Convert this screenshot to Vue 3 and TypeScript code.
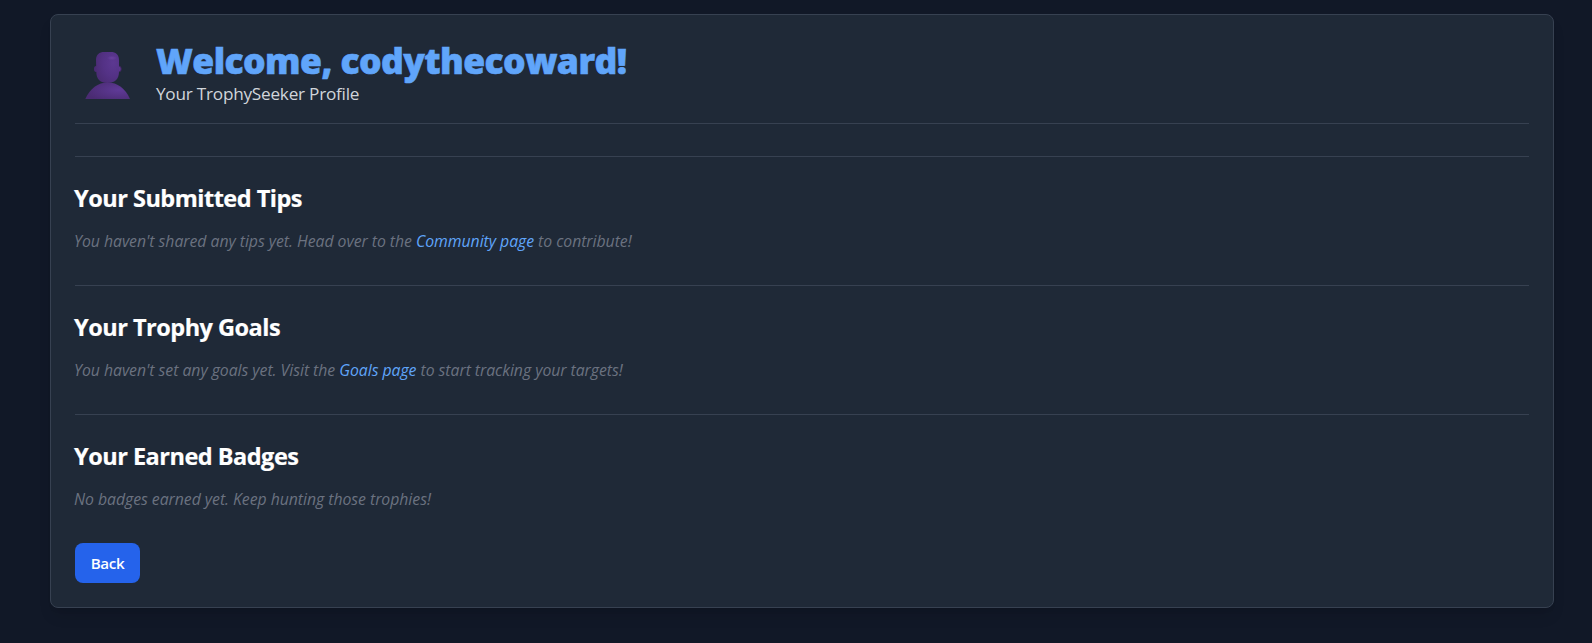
<template>
  <div class="profile-page">
    <main class="profile-card">
      <header class="profile-header">
        <svg class="profile-avatar" viewBox="0 0 64 64" aria-hidden="true">
          <defs>
            <radialGradient id="head" cx="0.75" cy="0.35" r="0.85">
              <stop offset="0" stop-color="#5c3891" />
              <stop offset="0.5" stop-color="#543286" />
              <stop offset="1" stop-color="#4a2b73" />
            </radialGradient>
            <radialGradient id="shoulders" cx="0.75" cy="0.45" r="0.75">
              <stop offset="0" stop-color="#5f3a97" />
              <stop offset="1" stop-color="#4a2b72" />
            </radialGradient>
            <radialGradient id="shine">
              <stop offset="0" stop-color="#6a419f" />
              <stop offset="1" stop-color="#6a419f" stop-opacity="0" />
            </radialGradient>
          </defs>
          <ellipse cx="21" cy="28" rx="2" ry="3" fill="#4a2b73" />
          <ellipse cx="44.200" cy="28" rx="2" ry="2.800" fill="#5a368c" stroke="#402460" stroke-width="0.8" />
          <path d="M10.300 58C15 47.500 23 41.500 32.700 41.500S50.500 47.500 55 58Z" fill="url(#shoulders)" />
          <path
            d="M21 19C21 13.500 24.500 11 29 11H36C40.500 11 44 13.500 44 19V31C44 38.500 39.500 41.900 32.500 41.900S21.300 38.500 21.300 31Z"
            fill="url(#head)" />
          <ellipse cx="37" cy="17" rx="5" ry="2.200" fill="url(#shine)" />
        </svg>

        <div>
          <h1 class="profile-title">Welcome, {{ username }}!</h1>
          <p class="profile-subtitle">Your TrophySeeker Profile</p>
        </div>
      </header>

      <section v-for="section in sections" :key="section.title" class="profile-section">
        <h2 class="section-title">{{ section.title }}</h2>
        <p class="section-empty">
          {{ section.before }}
          <template v-if="section.link">
            <a class="section-link" href="#" @click.prevent>{{ section.link }}</a>
            {{ section.after }}
          </template>
        </p>
      </section>

      <button class="back-button" type="button" @click="goBack">Back</button>
    </main>
  </div>
</template>

<script setup lang="ts">
import { ref } from 'vue';

interface ProfileSection {
  title: string;
  before: string;
  link?: string;
  after?: string;
}

const username = ref('codythecoward');

const sections: ProfileSection[] = [
  {
    title: 'Your Submitted Tips',
    before: "You haven't shared any tips yet. Head over to the",
    link: 'Community page',
    after: 'to contribute!',
  },
  {
    title: 'Your Trophy Goals',
    before: "You haven't set any goals yet. Visit the",
    link: 'Goals page',
    after: 'to start tracking your targets!',
  },
  {
    title: 'Your Earned Badges',
    before: 'No badges earned yet. Keep hunting those trophies!',
  },
];

function goBack() {
  window.history.back();
}
</script>

<style>
body {
  margin: 0;
  background: #111827;
}
</style>

<style scoped>
.profile-page {
  box-sizing: border-box;
  min-height: 643px;
  padding: 14px 38px 35px 50px;
  background: #111827;
  font-family: "Segoe UI", "Open Sans", "Noto Sans", sans-serif;
  font-size: 16px;
  line-height: 24px;
}

.profile-card {
  padding: 24px;
  border: 1px solid #374151;
  border-radius: 8px;
  background: #1f2937;
  box-shadow: 0 10px 15px -3px rgb(0 0 0 / 10%), 0 4px 6px -4px rgb(0 0 0 / 10%);
}

.profile-header {
  display: flex;
  align-items: center;
  gap: 17px;
  margin-bottom: 32px;
  padding-bottom: 16px;
  border-bottom: 1px solid #374151;
}

.profile-avatar {
  width: 64px;
  height: 64px;
}

.profile-title {
  box-sizing: border-box;
  height: 40px;
  margin: 0;
  padding-top: 2px;
  color: #60a5fa;
  font-size: 35.5px;
  font-weight: 800;
  letter-spacing: -0.59px;
  line-height: 38px;
  -webkit-text-stroke: 0.6px #60a5fa;
}

.profile-subtitle {
  margin: 0;
  padding-top: 1px;
  color: #d1d5db;
  font-size: 17.2px;
  letter-spacing: -0.24px;
  line-height: 27px;
}

.profile-section {
  margin-bottom: 32px;
  padding-top: 24px;
  border-top: 1px solid #374151;
}

.section-title {
  height: 31px;
  margin: 0 0 16px -1px;
  padding-top: 1px;
  color: #fff;
  font-size: 23.5px;
  font-weight: 700;
  letter-spacing: -0.5px;
  line-height: 32px;
  -webkit-text-stroke: 0.2px #fff;
}

.section-empty {
  height: 24px;
  margin: 0 0 0 -1px;
  color: #6b7280;
  font-size: 15.8px;
  font-style: italic;
  letter-spacing: -0.04px;
  line-height: 25px;
}

.section-link {
  color: #60a5fa;
  text-decoration: none;
}

.back-button {
  display: block;
  width: 65px;
  height: 40px;
  padding: 0;
  border: 0;
  border-radius: 8px;
  background: #2563eb;
  color: #fff;
  font-family: inherit;
  font-size: 15.2px;
  font-weight: 600;
  letter-spacing: -0.35px;
  line-height: 24px;
  cursor: pointer;
}
</style>
